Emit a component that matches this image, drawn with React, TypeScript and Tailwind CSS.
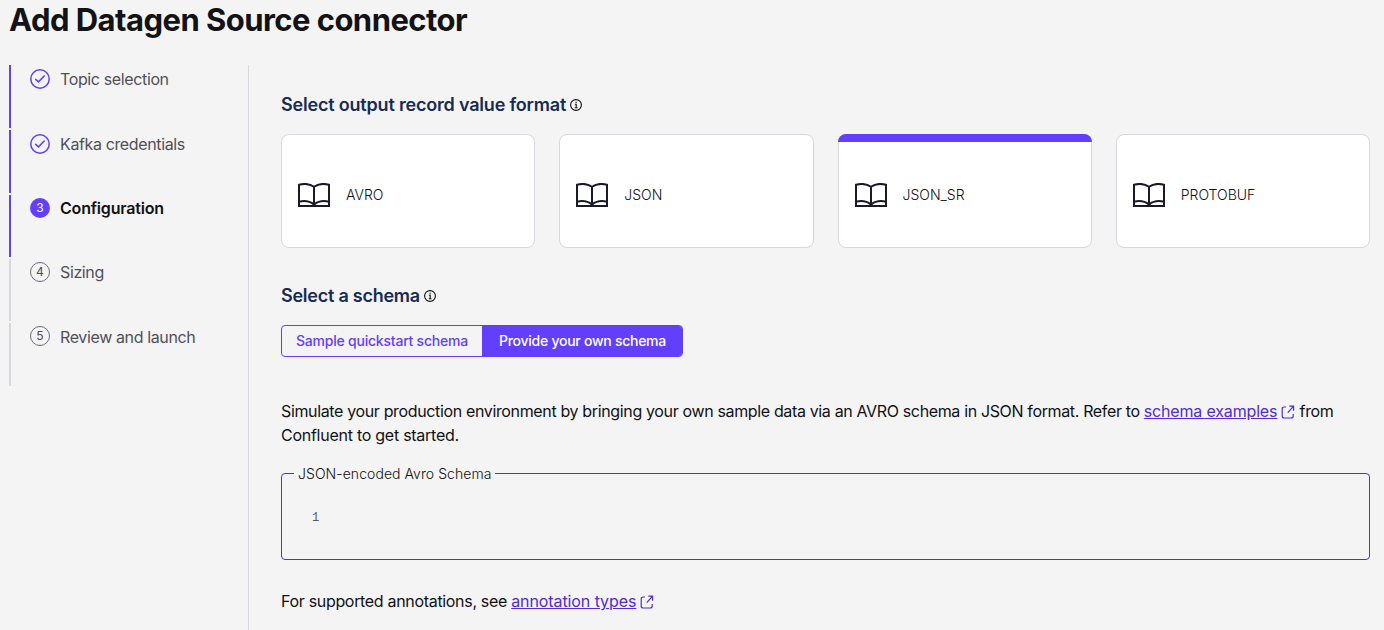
import React from 'react';

const steps = [
  { label: 'Topic selection', state: 'done', box: 'h-[63px] pt-1', text: '' },
  { label: 'Kafka credentials', state: 'done', box: 'h-[63px] pt-1', text: '' },
  { label: 'Configuration', state: 'active', box: 'h-[62px] pt-[3px]', text: '' },
  { label: 'Sizing', state: 'todo', box: 'h-[62px] pt-[3px]', text: '' },
  { label: 'Review and launch', state: 'todo', box: 'h-[63px] pt-[3px]', text: 'pt-px' },
];

function StepIcon({ n, state }: { n: number; state: string }) {
  if (state === 'done')
    return (
      <svg className="size-5 shrink-0" viewBox="0 0 20 20" fill="none" stroke="#6240fb" strokeWidth="1.6" strokeLinecap="round">
        <circle cx="10" cy="10" r="9.2" strokeWidth="1.5" />
        <path d="M5.7 10.4 8.5 12.8 14.2 7" />
      </svg>
    );
  if (state === 'active')
    return <span className="flex size-5 shrink-0 items-center justify-center rounded-full bg-[#6240fb] text-xs text-white">{n}</span>;
  return <span className="flex size-5 shrink-0 items-center justify-center rounded-full border border-[#6e6c85] text-xs text-[#4b4a5a]">{n}</span>;
}

function Info() {
  return (
    <svg className="size-3" viewBox="0 0 12 12" fill="none" stroke="#111" strokeWidth="1.1">
      <circle cx="6" cy="6" r="5.4" />
      <path d="M4.9 5.3H6.2V8.6M4.8 8.8H7.5M6.1 2.8V4" />
    </svg>
  );
}

function Book() {
  return (
    <svg className="h-6 w-8 shrink-0" viewBox="0 0 32 24" fill="none" stroke="#191927" strokeWidth="2">
      <path d="M1 1.8C6 .5 12 .8 16 3.8 20 .8 26 .5 31 1.8V22.9H1ZM16 3.8V22.5M1 18.8C6 17.4 12 18.4 16 21.6 20 18.4 26 17.4 31 18.8" />
    </svg>
  );
}

function External() {
  return (
    <svg className="inline size-[14px] align-[-2px]" viewBox="0 0 14 14" fill="none" stroke="#4f2bd9" strokeWidth="1.2">
      <path d="M5 2H3.2Q1.2 2 1.2 4V11Q1.2 13 3.2 13H10.2Q12.2 13 12.2 11V9M8.3 1.2H12.6V5.7M12.6 1.2 6.8 7.6" />
    </svg>
  );
}

export default function App() {
  return (
    <div className="h-[630px] overflow-hidden bg-[#f4f4f4] font-['Inter',sans-serif] text-[#111116]">
      <h1 className="h-[65px] pl-[9px] text-[31px] font-bold leading-[40px] tracking-[-0.54px] text-[#131316]">Add Datagen Source connector</h1>
      <div className="flex h-[565px]">
        <nav className="flex w-[249px] shrink-0 flex-col gap-[2px] border-r border-[#d7d7de] pl-[9px]">
          {steps.map((s, i) => (
            <div key={s.label} className={`flex shrink-0 items-start gap-[10px] border-l-2 pl-[19px] ${s.box} ${i < 3 ? 'border-[#6240fb]' : 'border-[#d7d7de]'}`}>
              <StepIcon n={i + 1} state={s.state} />
              <span className={`text-base leading-5 ${s.text} ${s.state === 'active' ? 'font-semibold tracking-[-0.19px]' : 'tracking-[-0.37px] text-[#50505a]'}`}>{s.label}</span>
            </div>
          ))}
        </nav>
        <main className="flex-1 pl-8 pr-[14px] pt-[28px]">
          <h2 className="flex items-center gap-1 text-lg font-semibold leading-6 tracking-[-0.19px] text-[#172b54]">Select output record value format<Info /></h2>
          <div className="mt-[17px] grid grid-cols-4 gap-6">
            {['AVRO', 'JSON', 'JSON_SR', 'PROTOBUF'].map((f) => (
              <div key={f} className="relative flex h-[114px] items-center gap-4 rounded-lg border border-[#d7d7de] bg-white px-4 pt-[8px] text-sm font-light">
                {f === 'JSON_SR' && <span className="absolute -inset-x-px -top-px h-2 rounded-t-lg bg-[#6240fb]" />}
                <Book />
                <span>{f}</span>
              </div>
            ))}
          </div>
          <h2 className="mt-9 flex items-center gap-1 text-lg font-semibold leading-6 tracking-[-0.24px] text-[#172b54]">Select a schema<Info /></h2>
          <div className="mt-[17px] flex h-8 w-[402px] overflow-hidden rounded border border-[#6240fb] text-sm font-medium tracking-[-0.22px]">
            <button className="w-[200px] text-[#6240fb]">Sample quickstart schema</button>
            <button className="flex-1 bg-[#6240fb] pl-px tracking-[-0.26px] text-white">Provide your own schema</button>
          </div>
          <p className="mt-[42px] text-base leading-6 tracking-[-0.355px]">Simulate your production environment by bringing your own sample data via an AVRO schema in JSON format. Refer to <a className="tracking-[-0.17px] text-[#4f2bd9] underline">schema examples</a> <External /> from<br /><span className="tracking-[-0.26px]">Confluent to get started.</span></p>
          <fieldset className="mt-[17px] h-[96px] rounded border border-[#5429e8] pl-3">
            <legend className="px-1 text-sm font-light leading-[18px] tracking-[0.06px]"><span className="relative top-px">JSON-encoded Avro Schema</span></legend>
            <div className="pl-[18px] pt-[28px] font-['Liberation_Mono',monospace] text-xs text-[#5a5a68]">1</div>
          </fieldset>
          <p className="mt-[29px] text-base leading-6 tracking-[-0.32px]">For supported annotations, see <a className="tracking-[-0.09px] text-[#4f2bd9] underline">annotation types</a> <External /></p>
        </main>
      </div>
    </div>
  );
}
